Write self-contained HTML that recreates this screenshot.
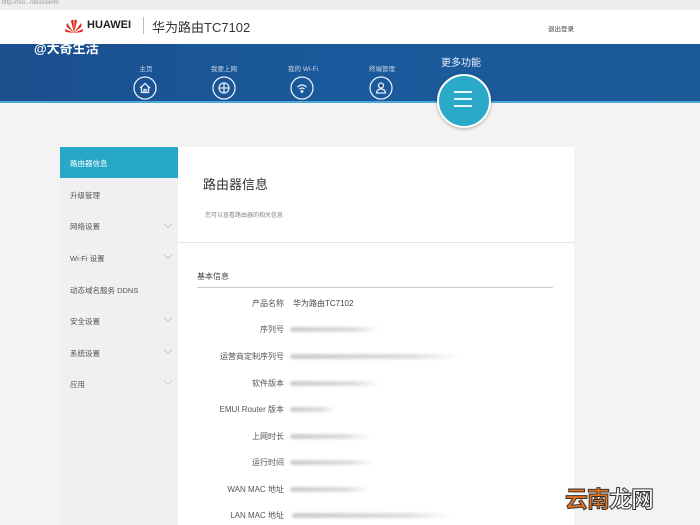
<!DOCTYPE html><html><head><meta charset="utf-8"><style>
body{margin:0;width:700px;height:525px;overflow:hidden;background:#f3f3f3;font-family:"Liberation Sans","Noto Sans CJK SC",sans-serif;position:relative}
.a{position:absolute}
.blur{position:absolute;height:5px;border-radius:3px;background:linear-gradient(90deg,#ccc,#ddd 70%,rgba(220,220,220,0));filter:blur(1.2px)}
.lab{position:absolute;right:416px;font-size:8px;color:#555;text-align:right;white-space:nowrap}
.sb{position:absolute;left:70px;font-size:7.5px;color:#555}
.chev{position:absolute;left:165px;width:5px;height:5px;border-right:1px solid #ccc;border-bottom:1px solid #ccc;transform:rotate(45deg)}
.nav{position:absolute;top:63px;font-size:6.5px;color:#c8d6e6;text-align:center;width:40px}
.ic{position:absolute;top:76px}
</style></head><body>
<div class="a" style="left:0;top:0;width:700px;height:10px;background:#eee;font-size:6px;color:#999">&nbsp;http://mo.../deviceinfo</div>
<div class="a" style="left:0;top:10px;width:700px;height:34px;background:#fff"></div>
<svg class="a" style="left:65px;top:19px" width="18" height="14" viewBox="0 0 18 14"><g fill="#e2231a"><path d="M9 14 L6 2 Q7 0 8.5 1Z"/><path d="M9 14 L12 2 Q11 0 9.5 1Z"/><path d="M9 14 L2 4 Q1 6 2 8Z"/><path d="M9 14 L16 4 Q17 6 16 8Z"/><path d="M9 14 L0 10 Q0 12 1 13Z"/><path d="M9 14 L18 10 Q18 12 17 13Z"/></g></svg>
<div class="a" style="left:87px;top:19px;font-size:11px;font-weight:bold;color:#222">HUAWEI</div>
<div class="a" style="left:143px;top:17px;width:1px;height:17px;background:#bbb"></div>
<div class="a" style="left:152px;top:17px;font-size:13px;color:#333">华为路由TC7102</div>
<div class="a" style="left:548px;top:23px;font-size:6.5px;color:#444">退出登录</div>
<div class="a" style="left:0;top:44px;width:700px;height:59px;background:linear-gradient(90deg,#1b4f8e,#1a5a9c 50%,#1d5a98)"></div>
<div class="a" style="left:0;top:101px;width:700px;height:2px;background:#4aa7d6"></div>
<div class="a" style="left:34px;top:38px;font-size:13px;font-weight:bold;color:#fff">@大奇生活</div>
<div class="nav" style="left:126px">主页</div><div class="nav" style="left:204px">我要上网</div><div class="nav" style="left:283px">我的 Wi-Fi</div><div class="nav" style="left:362px">终端管理</div>
<svg class="ic" style="left:133px" width="24" height="24" viewBox="0 0 24 24" fill="none" stroke="#e6eef6" stroke-width="1.3"><circle cx="12" cy="12" r="11"/><path d="M7 12 L12 7.5 L17 12 M8.5 11 V16.5 H15.5 V11 M11 16.5 V13.5 H13 V16.5"/></svg>
<svg class="ic" style="left:212px" width="24" height="24" viewBox="0 0 24 24" fill="none" stroke="#e6eef6" stroke-width="1.3"><circle cx="12" cy="12" r="11"/><circle cx="12" cy="12" r="5"/><path d="M7 12 H17 M12 7 V17"/></svg>
<svg class="ic" style="left:290px" width="24" height="24" viewBox="0 0 24 24" fill="none" stroke="#e6eef6" stroke-width="1.3"><circle cx="12" cy="12" r="11"/><path d="M7.5 11 Q12 7 16.5 11 M9.5 13 Q12 11 14.5 13"/><circle cx="12" cy="15.5" r="0.8" fill="#e6eef6"/></svg>
<svg class="ic" style="left:369px" width="24" height="24" viewBox="0 0 24 24" fill="none" stroke="#e6eef6" stroke-width="1.3"><circle cx="12" cy="12" r="11"/><circle cx="12" cy="9.5" r="2.5"/><path d="M7.5 17 Q8 13 12 13 Q16 13 16.5 17 Z"/></svg>
<div class="a" style="left:441px;top:54px;font-size:10px;color:#eef">更多功能</div>
<div class="a" style="left:437px;top:74px;width:50px;height:50px;border-radius:50%;background:#2aa9c8;border:2px solid #fff;box-shadow:0 1px 3px rgba(0,0,0,.3)"></div>
<div class="a" style="left:454px;top:91px;width:18px;height:2px;background:#e8f7fb;box-shadow:0 7px 0 #e8f7fb,0 14px 0 #e8f7fb"></div>
<div class="a" style="left:60px;top:147px;width:118px;height:378px;background:#f0f0f0"></div>
<div class="a" style="left:60px;top:147px;width:118px;height:31px;background:#27a8c8"></div>
<div class="sb" style="top:158px;color:#fff">路由器信息</div>
<div class="sb" style="top:190px">升级管理</div>
<div class="sb" style="top:221px">网络设置</div><div class="chev" style="top:221px"></div>
<div class="sb" style="top:253px">Wi-Fi 设置</div><div class="chev" style="top:252px"></div>
<div class="sb" style="top:285px">动态域名服务 DDNS</div>
<div class="sb" style="top:316px">安全设置</div><div class="chev" style="top:315px"></div>
<div class="sb" style="top:348px">系统设置</div><div class="chev" style="top:347px"></div>
<div class="sb" style="top:379px">应用</div><div class="chev" style="top:378px"></div>
<div class="a" style="left:178px;top:147px;width:396px;height:378px;background:#fff"></div>
<div class="a" style="left:203px;top:174px;font-size:13px;color:#333">路由器信息</div>
<div class="a" style="left:205px;top:210px;font-size:6px;color:#888">您可以查看路由器的相关信息</div>
<div class="a" style="left:178px;top:242px;width:396px;height:1px;background:#e4e4e4"></div>
<div class="a" style="left:197px;top:271px;font-size:8px;color:#444">基本信息</div>
<div class="a" style="left:197px;top:287px;width:356px;height:1px;background:#ccc"></div>
<div class="lab" style="top:298px">产品名称</div><div class="a" style="left:293px;top:298px;font-size:8px;color:#444">华为路由TC7102</div>
<div class="lab" style="top:324px">序列号</div><div class="blur" style="left:290px;top:327px;width:90px"></div>
<div class="lab" style="top:351px">运营商定制序列号</div><div class="blur" style="left:290px;top:354px;width:170px"></div>
<div class="lab" style="top:378px">软件版本</div><div class="blur" style="left:290px;top:381px;width:90px"></div>
<div class="lab" style="top:404px">EMUI Router 版本</div><div class="blur" style="left:290px;top:407px;width:45px"></div>
<div class="lab" style="top:431px">上网时长</div><div class="blur" style="left:290px;top:434px;width:80px"></div>
<div class="lab" style="top:457px">运行时间</div><div class="blur" style="left:290px;top:460px;width:85px"></div>
<div class="lab" style="top:484px">WAN MAC 地址</div><div class="blur" style="left:290px;top:487px;width:80px"></div>
<div class="lab" style="top:510px">LAN MAC 地址</div><div class="blur" style="left:292px;top:513px;width:160px"></div>
<div class="a" style="left:565px;top:480px;font-size:23px;font-weight:bold;color:#e8731e;-webkit-text-stroke:1px #333;letter-spacing:-1px">云南<span style="color:#fff">龙网</span></div>
</body></html>
